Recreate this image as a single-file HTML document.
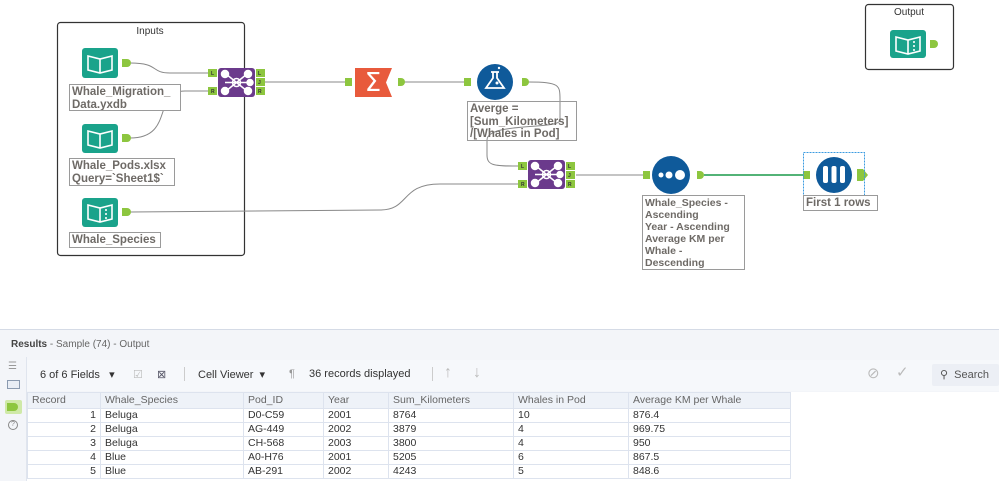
<!DOCTYPE html>
<html><head><meta charset="utf-8"><style>
*{margin:0;padding:0;box-sizing:border-box}
body{width:999px;height:481px;overflow:hidden;background:#fff;font-family:"Liberation Sans",sans-serif;position:relative}
.lbl{position:absolute;border:1px solid #9a9a9a;background:#fff;font-size:11.5px;font-weight:bold;color:#6e6a66;line-height:12.5px;padding:1px 2px;white-space:nowrap;overflow:hidden}
.t{position:absolute;font-size:11px;color:#333;white-space:nowrap}
table{position:absolute;left:27px;top:392px;border-collapse:collapse;font-size:10.5px;color:#333}
td{border:1px solid #dde3ee;height:14px;padding:0 4px;line-height:13px;background:#fff}
tr.h td{background:#eef2f8;color:#666;height:16px}
</style></head><body>
<svg width="999" height="330" style="position:absolute;left:0;top:0" font-family="Liberation Sans" >
<rect x="57.5" y="22.5" width="187" height="233" rx="3" fill="none" stroke="#333" stroke-width="1.2"/>
<text x="150" y="34" font-size="10" text-anchor="middle" fill="#333">Inputs</text>
<rect x="865.5" y="4.5" width="88" height="65" rx="3" fill="none" stroke="#333" stroke-width="1.2"/>
<text x="909" y="15" font-size="10" text-anchor="middle" fill="#333">Output</text>
<g fill="none" stroke="#888" stroke-width="1">
<path d="M130,63 C160,63 150,73 170,73 L208,73"/>
<path d="M130,138 C175,138 152,91 185,91 L208,91"/>
<path d="M265,82 L345,82"/><path d="M404,82 L470,82"/>
<path d="M528,82 C560,82 560,85 560,100 L560,120 C560,130 487,122 487,140 L487,155 C487,166 495,166 518,166"/>
<path d="M130,212 L380,210 C410,210 400,184 440,184 L518,184"/>
<path d="M576,175 L643,175"/>
</g>
<path d="M704,175 L806,175" stroke="#1a9a4a" stroke-width="1.5"/>
<rect x="82" y="48" width="36" height="30" rx="3" fill="#1aa38b"/><path d="M88,56 L100,59 L112,56 L112,70 L100,73 L88,70Z M100,59 L100,73" fill="none" stroke="#fff" stroke-width="1.6"/>
<rect x="82" y="124" width="36" height="29" rx="3" fill="#1aa38b"/><path d="M88,131 L100,134 L112,131 L112,145 L100,148 L88,145Z M100,134 L100,148" fill="none" stroke="#fff" stroke-width="1.6"/>
<rect x="82" y="198" width="36" height="29" rx="3" fill="#1aa38b"/><path d="M88,205 L100,208 L112,205 L112,219 L100,222 L88,219Z M100,208 L100,222 M106,209 v2 M106,213 v2 M106,217 v2" fill="none" stroke="#fff" stroke-width="1.6"/>
<rect x="890" y="30" width="36" height="28" rx="3" fill="#1aa38b"/><path d="M896,37 L908,40 L920,37 L920,51 L908,54 L896,51Z M908,40 L908,54 M914,41 v2 M914,45 v2 M914,49 v2" fill="none" stroke="#fff" stroke-width="1.6"/>
<g fill="#8dc63f">
<path d="M122,59 h5 a4,4 0 0 1 0,8 h-5z"/><path d="M122,134 h5 a4,4 0 0 1 0,8 h-5z"/><path d="M122,208 h5 a4,4 0 0 1 0,8 h-5z"/>
<path d="M930,40 h4 a4,4 0 0 1 0,8 h-4z"/><path d="M398,78 h3 a4,4 0 0 1 0,8 h-3z"/><path d="M522,78 h3 a4,4 0 0 1 0,8 h-3z"/>
<path d="M697,171 h3 a4,4 0 0 1 0,8 h-3z"/><path d="M857,169 h6 l5,6 l-5,6 h-6z"/>
<rect x="208" y="69" width="9" height="8"/><rect x="208" y="87" width="9" height="8"/>
<rect x="256" y="69" width="9" height="8"/><rect x="256" y="78" width="9" height="8"/><rect x="256" y="87" width="9" height="8"/>
<rect x="345" y="78" width="7" height="8"/><rect x="464" y="78" width="7" height="8"/>
<rect x="518" y="162" width="9" height="8"/><rect x="518" y="180" width="9" height="8"/>
<rect x="566" y="162" width="9" height="8"/><rect x="566" y="171" width="9" height="8"/><rect x="566" y="180" width="9" height="8"/>
<rect x="643" y="171" width="7" height="8"/><rect x="803" y="171" width="7" height="8"/>
</g>
<g font-size="5" font-weight="bold" fill="#333"><text x="211" y="75">L</text><text x="211" y="93">R</text><text x="258" y="75">L</text><text x="258" y="84">J</text><text x="258" y="93">R</text>
<text x="521" y="168">L</text><text x="521" y="186">R</text><text x="568" y="168">L</text><text x="568" y="177">J</text><text x="568" y="186">R</text></g>
<g id="j"><rect x="218" y="68" width="37" height="29" rx="3" fill="#6b3a8c"/>
<g fill="#fff" stroke="#fff" stroke-width="1.5"><circle cx="236.5" cy="82.5" r="4" fill="none"/><line x1="226" y1="74" x2="247" y2="91"/><line x1="247" y1="74" x2="226" y2="91"/><line x1="225" y1="82.5" x2="248" y2="82.5"/>
<circle cx="225" cy="74" r="3.5"/><circle cx="248" cy="74" r="3.5"/><circle cx="225" cy="91" r="3.5"/><circle cx="248" cy="91" r="3.5"/><circle cx="250" cy="82.5" r="3"/></g></g>
<use href="#j" x="310" y="92"/>
<path d="M355,68 h37 l-6,14.5 l6,14.5 h-37z" fill="#e85a3c"/>
<text x="373" y="91" font-size="26" fill="#fff" text-anchor="middle" font-family="DejaVu Sans">Σ</text>
<circle cx="495" cy="82" r="18" fill="#0f5a9a"/>
<path d="M491,72 h8 M493,72 v6 l-7,10 h18 l-7,-10 v-6" fill="none" stroke="#fff" stroke-width="1.8"/><circle cx="497" cy="83" r="1.5" fill="#fff"/><circle cx="499" cy="68" r="1.2" fill="#fff"/>
<circle cx="671" cy="175" r="19" fill="#0f5a9a"/><circle cx="661" cy="175" r="2.5" fill="#fff"/><circle cx="669" cy="175" r="3.5" fill="#fff"/><circle cx="680" cy="175" r="5" fill="#fff"/>
<rect x="803.5" y="152.5" width="61" height="44" fill="none" stroke="#3b9be0" stroke-dasharray="2,1"/>
<circle cx="834" cy="175" r="18" fill="#0f5a9a"/><g fill="#fff"><rect x="823" y="166" width="5" height="17" rx="2"/><rect x="831.5" y="166" width="5" height="17" rx="2"/><rect x="840" y="166" width="5" height="17" rx="2"/></g>
</svg>
<div class="lbl" style="left:69px;top:84px;width:112px;height:27px">Whale_Migration_<br>Data.yxdb</div>
<div class="lbl" style="left:69px;top:158px;width:106px;height:28px">Whale_Pods.xlsx<br>Query=`Sheet1$`</div>
<div class="lbl" style="left:69px;top:232px;width:92px;height:16px">Whale_Species</div>
<div class="lbl" style="left:467px;top:101px;width:110px;height:40px;background:transparent">Averge =<br>[Sum_Kilometers]<br>/[Whales in Pod]</div>
<div class="lbl" style="left:642px;top:195px;width:103px;height:75px;font-size:10.5px;line-height:12px">Whale_Species -<br>Ascending<br>Year - Ascending<br>Average KM per<br>Whale -<br>Descending</div>
<div class="lbl" style="left:803px;top:195px;width:75px;height:16px">First 1 rows</div>

<div style="position:absolute;left:0;top:329px;width:999px;height:152px;background:#f3f5f9;border-top:1px solid #d5dbe6"></div>
<div class="t" style="left:11px;top:339px;font-size:10px;color:#666"><b style="color:#444">Results</b> - Sample (74) - Output</div>
<div style="position:absolute;left:0;top:357px;width:27px;height:124px;background:#f3f5f9;border-right:1px solid #e0e5ee"></div>
<div class="t" style="left:8px;top:361px;color:#999;font-size:10px">☰</div>
<div style="position:absolute;left:7px;top:380px;width:13px;height:9px;border:1px solid #8a9ab0;background:#e8edf5"></div>
<div style="position:absolute;left:5px;top:400px;width:17px;height:14px;background:#cfe9a8;border-radius:2px"><div style="margin:3px 2px;width:11px;height:8px;background:#8dc63f;border-radius:0 4px 4px 0"></div></div>
<div style="position:absolute;left:8px;top:420px;width:10px;height:10px;border:1px solid #888;border-radius:50%;font-size:7px;color:#888;text-align:center;line-height:8px">?</div>
<div style="position:absolute;left:27px;top:360px;width:972px;height:31px;background:#f6f8fb"></div>
<div class="t" style="left:40px;top:368px">6 of 6 Fields &nbsp;&nbsp;▾</div>
<div class="t" style="left:133px;top:368px;color:#bbb">☑</div>
<div class="t" style="left:157px;top:368px;color:#556">⊠</div>
<div style="position:absolute;left:184px;top:367px;width:1px;height:14px;background:#ccc"></div>
<div class="t" style="left:198px;top:368px">Cell Viewer &nbsp;▾</div>
<div class="t" style="left:289px;top:368px;color:#999">¶</div>
<div class="t" style="left:309px;top:368px">36 records displayed</div>
<div style="position:absolute;left:432px;top:367px;width:1px;height:14px;background:#ccc"></div>
<div class="t" style="left:444px;top:364px;color:#bbb;font-size:16px">↑</div>
<div class="t" style="left:473px;top:364px;color:#bbb;font-size:16px">↓</div>
<div class="t" style="left:867px;top:364px;color:#bbb;font-size:15px">⊘</div>
<div class="t" style="left:896px;top:363px;color:#bbb;font-size:15px">✓</div>
<div style="position:absolute;left:932px;top:364px;width:67px;height:22px;background:#eceff5;border-radius:2px"></div>
<div class="t" style="left:940px;top:368px;color:#555">⚲ &nbsp;Search</div>
<div style="position:absolute;left:27px;top:392px;width:972px;height:89px;background:#fff"></div>
<table>
<tr class="h"><td style="width:73px">Record</td><td style="width:143px">Whale_Species</td><td style="width:80px">Pod_ID</td><td style="width:65px">Year</td><td style="width:125px">Sum_Kilometers</td><td style="width:115px">Whales in Pod</td><td style="width:162px">Average KM per Whale</td></tr>
<tr><td style="text-align:right">1</td><td>Beluga</td><td>D0-C59</td><td>2001</td><td>8764</td><td>10</td><td>876.4</td></tr>
<tr><td style="text-align:right">2</td><td>Beluga</td><td>AG-449</td><td>2002</td><td>3879</td><td>4</td><td>969.75</td></tr>
<tr><td style="text-align:right">3</td><td>Beluga</td><td>CH-568</td><td>2003</td><td>3800</td><td>4</td><td>950</td></tr>
<tr><td style="text-align:right">4</td><td>Blue</td><td>A0-H76</td><td>2001</td><td>5205</td><td>6</td><td>867.5</td></tr>
<tr><td style="text-align:right">5</td><td>Blue</td><td>AB-291</td><td>2002</td><td>4243</td><td>5</td><td>848.6</td></tr>
</table>
</body></html>
